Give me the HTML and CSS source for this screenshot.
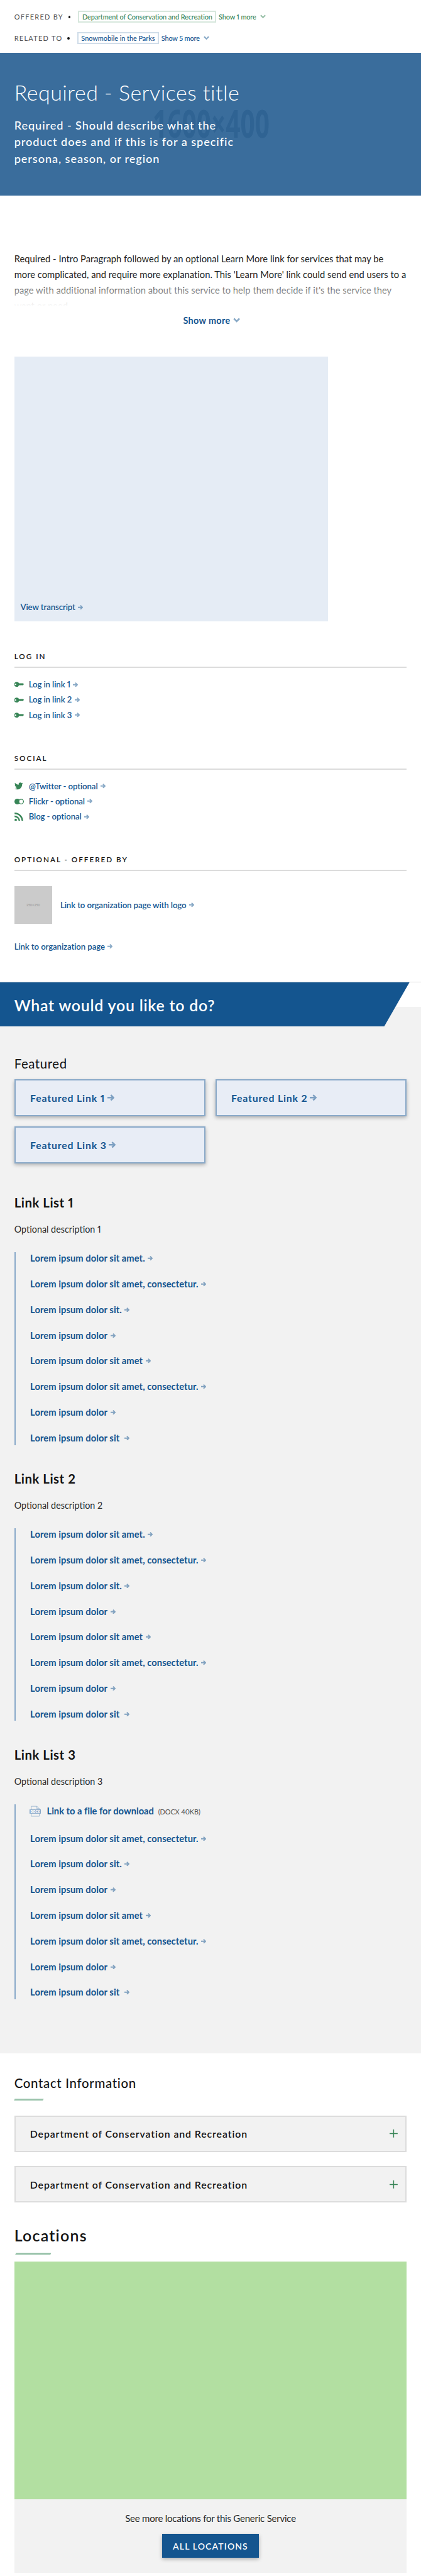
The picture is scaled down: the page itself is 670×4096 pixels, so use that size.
FILE: index.html
```html
<!DOCTYPE html>
<html lang="en">
<head>
<meta charset="utf-8">
<title>Required - Services title</title>
<link rel="stylesheet" href="styles.css">
</head>
<body>
<svg class="sprite" aria-hidden="true">
  <symbol id="arrow" viewBox="0 0 11 10"><path d="M0 5h8.600M5.200 .9L9.300 5 5.200 9.100" fill="none" stroke="currentColor" stroke-width="2.500"/></symbol>
  <symbol id="chevron" viewBox="0 0 12 9"><path d="M1.200 1.600L6 6.400l4.800-4.800" fill="none" stroke="currentColor" stroke-width="2.800"/></symbol>
  <symbol id="key" viewBox="0 0 20 11"><path fill="currentColor" fill-rule="evenodd" d="M5 .3a5.200 5.200 0 0 1 4.700 3H18.300L20 5l-1.800 1.900-1 .2-.9 1-1.100-1-1 1-1.200-1-1 .9-.9-.8H9.600A5.200 5.200 0 1 1 5 .3zM2.500 4a1.500 1.500 0 1 0 0 3 1.500 1.500 0 0 0 0-3z"/></symbol>
  <symbol id="twitter" viewBox="0 0 24 24"><path fill="currentColor" d="M23.950 4.570a10 10 0 0 1-2.820.780 4.960 4.960 0 0 0 2.160-2.730c-.950.560-2 .960-3.120 1.190a4.920 4.920 0 0 0-8.390 4.480C7.690 8.100 4.070 6.130 1.640 3.160a4.820 4.820 0 0 0-.670 2.480c0 1.710.870 3.210 2.190 4.100a4.900 4.900 0 0 1-2.230-.620v.060a4.920 4.920 0 0 0 3.950 4.830 5 5 0 0 1-2.210.080 4.940 4.940 0 0 0 4.600 3.420A9.870 9.870 0 0 1 0 19.540a14 14 0 0 0 7.550 2.210c9.050 0 14-7.500 14-13.980 0-.210 0-.420-.020-.630a9.940 9.940 0 0 0 2.460-2.550z"/></symbol>
  <symbol id="flickr" viewBox="0 0 20 12"><circle cx="6" cy="6" r="6" fill="currentColor"/><circle cx="14.200" cy="6" r="4.900" fill="#fff" stroke="currentColor" stroke-width="1.600"/></symbol>
  <symbol id="feed" viewBox="0 0 19 18"><circle cx="2.700" cy="15.400" r="2.500" fill="currentColor"/><path d="M.3 8a10 10 0 0 1 10 10M.3 1.700A16.300 16.300 0 0 1 16.800 18" fill="none" stroke="currentColor" stroke-width="3.200"/></symbol>
</svg>

<header class="relations">
  <div class="relation relation-green">
    <span class="relation-label">OFFERED BY</span><span class="dot"></span>
    <a class="tag tag-org">Department of Conservation and Recreation</a>
    <a class="tag-more">Show 1 more<svg class="chevron"><use href="#chevron"/></svg></a>
  </div>
  <div class="relation">
    <span class="relation-label">RELATED TO</span><span class="dot"></span>
    <a class="tag">Snowmobile in the Parks</a>
    <a class="tag-more">Show 5 more<svg class="chevron"><use href="#chevron"/></svg></a>
  </div>
</header>

<section class="hero">
  <svg class="hero-size" viewBox="0 0 246 60"><text x="0" y="58" textLength="246" lengthAdjust="spacingAndGlyphs">1600×400</text></svg>
  <h1 class="hero-title">Required - Services title</h1>
  <p class="hero-text">Required - Should describe what the<br>product does and if this is for a specific<br>persona, season, or region</p>
</section>

<main>
  <div class="wrap">
    <p class="intro">Required - Intro Paragraph followed by an optional Learn More link for services that may be<br>more complicated, and require more explanation. This 'Learn More' link could send end users to a<br>page with additional information about this service to help them decide if it's the service they<br>want or need.</p>
    <a class="show-more">Show more<svg class="chevron chevron-large"><use href="#chevron"/></svg></a>
    <div class="video"><a class="link">View transcript<svg class="arrow"><use href="#arrow"/></svg></a></div>

    <section class="side">
      <h2 class="side-title">LOG IN</h2>
      <ul class="icon-list">
        <li><svg class="icon icon-key"><use href="#key"/></svg><a class="link">Log in link 1<svg class="arrow"><use href="#arrow"/></svg></a></li>
        <li><svg class="icon icon-key"><use href="#key"/></svg><a class="link">Log in link 2<svg class="arrow"><use href="#arrow"/></svg></a></li>
        <li><svg class="icon icon-key"><use href="#key"/></svg><a class="link">Log in link 3<svg class="arrow"><use href="#arrow"/></svg></a></li>
      </ul>
    </section>
    <section class="side">
      <h2 class="side-title">SOCIAL</h2>
      <ul class="icon-list">
        <li><svg class="icon icon-twitter"><use href="#twitter"/></svg><a class="link">@Twitter - optional<svg class="arrow"><use href="#arrow"/></svg></a></li>
        <li><svg class="icon icon-flickr"><use href="#flickr"/></svg><a class="link">Flickr - optional<svg class="arrow"><use href="#arrow"/></svg></a></li>
        <li><svg class="icon icon-feed"><use href="#feed"/></svg><a class="link">Blog - optional<svg class="arrow"><use href="#arrow"/></svg></a></li>
      </ul>
    </section>
    <section class="side">
      <h2 class="side-title">OPTIONAL - OFFERED BY</h2>
      <div class="org">
        <span class="org-logo">250×250</span>
        <a class="link">Link to organization page with logo<svg class="arrow"><use href="#arrow"/></svg></a>
      </div>
      <a class="link org-page">Link to organization page<svg class="arrow"><use href="#arrow"/></svg></a>
    </section>
  </div>

  <section class="actions">
    <h2 class="banner">What would you like to do?</h2>
    <div class="wrap">
      <h3 class="featured-title">Featured</h3>
      <div class="cards">
        <a class="card">Featured Link 1<svg class="arrow"><use href="#arrow"/></svg></a>
        <a class="card">Featured Link 2<svg class="arrow"><use href="#arrow"/></svg></a>
        <a class="card">Featured Link 3<svg class="arrow"><use href="#arrow"/></svg></a>
      </div>

      <section class="list-block">
        <h3 class="list-title">Link List 1</h3>
        <p class="list-text">Optional description 1</p>
        <ul class="links">
          <li>Lorem ipsum dolor sit amet.<svg class="arrow"><use href="#arrow"/></svg></li>
          <li>Lorem ipsum dolor sit amet, consectetur.<svg class="arrow"><use href="#arrow"/></svg></li>
          <li>Lorem ipsum dolor sit.<svg class="arrow"><use href="#arrow"/></svg></li>
          <li>Lorem ipsum dolor<svg class="arrow"><use href="#arrow"/></svg></li>
          <li>Lorem ipsum dolor sit amet<svg class="arrow"><use href="#arrow"/></svg></li>
          <li>Lorem ipsum dolor sit amet, consectetur.<svg class="arrow"><use href="#arrow"/></svg></li>
          <li>Lorem ipsum dolor<svg class="arrow"><use href="#arrow"/></svg></li>
          <li>Lorem ipsum dolor sit&nbsp;<svg class="arrow"><use href="#arrow"/></svg></li>
        </ul>
      </section>
      <section class="list-block">
        <h3 class="list-title">Link List 2</h3>
        <p class="list-text">Optional description 2</p>
        <ul class="links">
          <li>Lorem ipsum dolor sit amet.<svg class="arrow"><use href="#arrow"/></svg></li>
          <li>Lorem ipsum dolor sit amet, consectetur.<svg class="arrow"><use href="#arrow"/></svg></li>
          <li>Lorem ipsum dolor sit.<svg class="arrow"><use href="#arrow"/></svg></li>
          <li>Lorem ipsum dolor<svg class="arrow"><use href="#arrow"/></svg></li>
          <li>Lorem ipsum dolor sit amet<svg class="arrow"><use href="#arrow"/></svg></li>
          <li>Lorem ipsum dolor sit amet, consectetur.<svg class="arrow"><use href="#arrow"/></svg></li>
          <li>Lorem ipsum dolor<svg class="arrow"><use href="#arrow"/></svg></li>
          <li>Lorem ipsum dolor sit&nbsp;<svg class="arrow"><use href="#arrow"/></svg></li>
        </ul>
      </section>
      <section class="list-block">
        <h3 class="list-title">Link List 3</h3>
        <p class="list-text">Optional description 3</p>
        <ul class="links">
          <li class="file">
            <svg class="file-icon" viewBox="0 0 24 24"><path d="M3.500 8V1.500h12l5 5V8M3.500 16v6.500h17V16M15.500 1.500v5h5" fill="none" stroke="currentColor"/><path d="M0 8h24v9H0z" fill="currentColor"/><text x="2" y="15.300" textLength="20" lengthAdjust="spacingAndGlyphs">DOCX</text></svg>
            <span>Link to a file for download</span><span class="file-size">(DOCX 40KB)</span>
          </li>
          <li>Lorem ipsum dolor sit amet, consectetur.<svg class="arrow"><use href="#arrow"/></svg></li>
          <li>Lorem ipsum dolor sit.<svg class="arrow"><use href="#arrow"/></svg></li>
          <li>Lorem ipsum dolor<svg class="arrow"><use href="#arrow"/></svg></li>
          <li>Lorem ipsum dolor sit amet<svg class="arrow"><use href="#arrow"/></svg></li>
          <li>Lorem ipsum dolor sit amet, consectetur.<svg class="arrow"><use href="#arrow"/></svg></li>
          <li>Lorem ipsum dolor<svg class="arrow"><use href="#arrow"/></svg></li>
          <li>Lorem ipsum dolor sit&nbsp;<svg class="arrow"><use href="#arrow"/></svg></li>
        </ul>
      </section>
    </div>
  </section>

  <section class="wrap contact">
    <h2 class="contact-title">Contact Information</h2>
    <div class="rule"></div>
    <div class="accordion">Department of Conservation and Recreation<svg class="plus" viewBox="0 0 17 17"><path d="M8.500 0v17M0 8.500h17"/></svg></div>
    <div class="accordion">Department of Conservation and Recreation<svg class="plus" viewBox="0 0 17 17"><path d="M8.500 0v17M0 8.500h17"/></svg></div>
  </section>

  <section class="wrap locations">
    <h2 class="locations-title">Locations</h2>
    <div class="rule rule-wide"></div>
    <div class="map"></div>
    <div class="map-footer">
      <p class="map-text">See more locations for this Generic Service</p>
      <a class="button">ALL LOCATIONS</a>
    </div>
  </section>
</main>
</body>
</html>
```
FILE: styles.css
```css
/* 1rem is the 10-unit layout step */
html { font-size: 7.557px; }
* { box-sizing: border-box; margin: 0; padding: 0; }
body { font-family: Lato, "Open Sans", sans-serif; font-variant-numeric: proportional-nums; font-size: 1.95rem; color: #141414; background: #fff; white-space: nowrap; overflow-x: hidden; }
ul { list-style: none; }
svg { display: block; flex: none; }
.sprite { position: absolute; width: 0; height: 0; }
.wrap { padding: 0 3rem; }
.arrow { width: 1.1rem; height: 1rem; color: #14558f; opacity: .5; margin-left: .6rem; }
.chevron { width: 1.2rem; height: .9rem; opacity: .5; margin-left: .9rem; }

.relations { display: flex; flex-direction: column; gap: 2rem; height: 11.1rem; padding: 2.3rem 3rem 1.8rem; }
.relation { display: flex; align-items: center; height: 2.5rem; font-size: 1.45rem; font-weight: 500; color: #14558f; }
.relation-green { color: #388557; }
.relation-label { color: #535353; font-weight: 400; letter-spacing: .118em; }
.dot { width: .5rem; height: .5rem; margin: 0 1.6rem 0 1rem; border-radius: 50%; background: #141414; }
.tag { display: flex; align-items: center; height: 2.5rem; padding: 0 .6rem; border: 2px solid #d0dde9; letter-spacing: -.0055em; }
.relation-green .tag { border-color: #d7e7dd; }
.tag-org { letter-spacing: -.0124em; }
.tag-more { display: flex; align-items: center; margin-left: .5rem; letter-spacing: -.0146em; }
.tag-more .chevron { margin-left: .8rem; }

.hero { position: relative; height: 30rem; padding: 5.66rem 3rem 0; color: #fff; background: #3a6d9c; }
.hero-size { position: absolute; left: 32.1rem; top: 12rem; width: 24.6rem; height: 6rem; overflow: visible; font: 700 80px "Open Sans", sans-serif; fill: #2f6393; }
.hero-title { position: relative; font-size: 4.5rem; font-weight: 300; line-height: 5.4rem; letter-spacing: .0144em; }
.hero-text { position: relative; margin-top: 2.46rem; font-size: 2.4rem; font-weight: 500; line-height: 3.5rem; letter-spacing: .0516em; }

.intro { position: relative; margin-top: 11.73rem; height: 11.57rem; overflow: hidden; line-height: 3.3rem; letter-spacing: .001em; color: #222; }
.intro::after { content: ""; position: absolute; inset: 50% 0 0; background: linear-gradient(rgba(255, 255, 255, 0), #fff); }
.show-more { display: flex; align-items: center; justify-content: center; margin-top: 1.84rem; padding-left: .5rem; line-height: 2.4rem; font-size: 1.9rem; font-weight: 700; letter-spacing: .025em; color: #14558f; }
.chevron-large { width: 1.5rem; height: 1.1rem; margin-left: .6rem; }
.video { display: flex; align-items: flex-end; width: 66.1rem; height: 55.7rem; margin-top: 6.36rem; padding: 0 1.3rem 1.81rem; background: #e5ecf5; }
.link { display: flex; align-items: center; font-size: 1.75rem; font-weight: 600; line-height: 2.2rem; letter-spacing: -.008em; color: #14558f; }

.side { padding-top: 6.45rem; }
.side-title { padding-bottom: 1.18rem; border-bottom: 2px solid #dcdcdc; font-size: 1.55rem; font-weight: 600; line-height: 2rem; letter-spacing: .17em; }
.icon-list { margin-top: 1.87rem; }
.icon-list li { display: flex; align-items: center; height: 3.2rem; }
.icon { color: #388557; }
.icon-key { width: 2rem; height: 1.1rem; margin-right: 1.05rem; }
.icon-twitter { width: 1.8rem; height: 1.8rem; margin: 0 1.15rem 0 .1rem; }
.icon-flickr { width: 2rem; height: 1.2rem; margin-right: 1.05rem; }
.icon-feed { width: 1.9rem; height: 1.8rem; margin-right: 1.15rem; }
.org { display: flex; align-items: center; gap: 1.7rem; margin-top: 3.15rem; }
.org-logo { display: flex; align-items: center; justify-content: center; width: 8rem; height: 8rem; font-size: .7rem; font-weight: 700; color: #a3a3a3; background: #cbcbcb; }
.org-page { margin-top: 3.62rem; }

.actions { margin-top: 6.28rem; border-top: 1px solid #dcdcdc; padding-bottom: 11.4rem; background: linear-gradient(#fff 5.1rem, #f2f2f2 5.1rem); }
.banner { display: flex; align-items: center; width: 86.25rem; height: 9.3rem; padding: .34rem 3rem 0; font-size: 3.3rem; font-weight: 600; letter-spacing: .0306em; color: #fff; background: #14558f; clip-path: polygon(0 0, 100% 0, 80.9rem 100%, 0 100%); }
.featured-title { margin-top: 6.16rem; font-size: 2.7rem; font-weight: 400; line-height: 3.2rem; letter-spacing: .0295em; }
.cards { display: grid; grid-template-columns: 1fr 1fr; gap: 2.03rem 2rem; margin-top: 1.74rem; }
.card { display: flex; align-items: center; height: 7.87rem; padding: 0 3.1rem; border: 2px solid #89a9c9; background: #e8edf6; box-shadow: 0 .4rem .8rem rgba(0, 0, 0, .3); font-size: 2.1rem; font-weight: 700; letter-spacing: .052em; color: #14558f; }
.card .arrow { width: 1.5rem; height: 1.4rem; margin-left: .5rem; }
.list-block { margin-top: 5.53rem; }
.cards + .list-block { margin-top: 6.63rem; }
.list-title { font-size: 2.7rem; font-weight: 700; line-height: 3.2rem; letter-spacing: .025em; }
.list-text { margin-top: 2.82rem; font-size: 1.9rem; line-height: 2.4rem; color: #2a2a2a; }
.links { display: flex; flex-direction: column; gap: 2.8rem; margin-top: 3.55rem; padding: .05rem 0 .15rem 3.1rem; border-left: .3rem solid #89a9c9; font-weight: 700; line-height: 2.6rem; letter-spacing: .004em; color: #14558f; }
.links li { display: flex; align-items: center; }
.links .file { height: 3.1rem; padding-bottom: .2rem; letter-spacing: -.001em; }
.file-icon { width: 2.4rem; height: 2.4rem; margin: 0 1.3rem 0 -.2rem; color: #89a9c9; font: 800 8px "Open Sans", sans-serif; letter-spacing: 0; }
.file-icon text { fill: #fff; }
.file-size { margin: .2rem 0 0 .9rem; font-size: 1.45rem; font-weight: 400; letter-spacing: -.0085em; color: #535353; }

.contact { padding-top: 4.63rem; }
.contact-title { font-size: 2.7rem; font-weight: 500; line-height: 3.2rem; letter-spacing: .0334em; }
.rule { width: 6.1rem; height: .35rem; margin: 1.67rem 0 3.15rem .1rem; background: #9bc4ac; transform: skewX(-25deg); }
.rule-wide { width: 7.4rem; margin: 1.68rem 0 1.55rem .3rem; }
.accordion { display: flex; align-items: center; justify-content: space-between; height: 7.7rem; padding: 0 1.6rem 0 3.05rem; border: 2px solid #dcdcdc; background: #f2f2f2; font-size: 2.1rem; font-weight: 600; letter-spacing: .057em; }
.accordion + .accordion { margin-top: 2.97rem; }
.plus { width: 1.7rem; height: 1.7rem; stroke: #388557; stroke-width: 2; }
.locations { padding-top: 4.83rem; }
.locations-title { font-size: 3.3rem; font-weight: 600; line-height: 4rem; letter-spacing: .0494em; }
.map { height: 50rem; background: #b2dfa1; }
.map-footer { display: flex; flex-direction: column; align-items: center; padding: 2.73rem 0 3.17rem; background: #f2f2f2; }
.map-text { font-size: 2rem; line-height: 2.4rem; letter-spacing: -.018em; color: #2a2a2a; }
.button { display: flex; align-items: center; justify-content: center; width: 20.5rem; height: 5rem; margin-top: 2.17rem; background: #14558f; box-shadow: 0 .4rem .8rem rgba(0, 0, 0, .3); font-size: 1.85rem; font-weight: 600; letter-spacing: .0816em; color: #fff; }
```
